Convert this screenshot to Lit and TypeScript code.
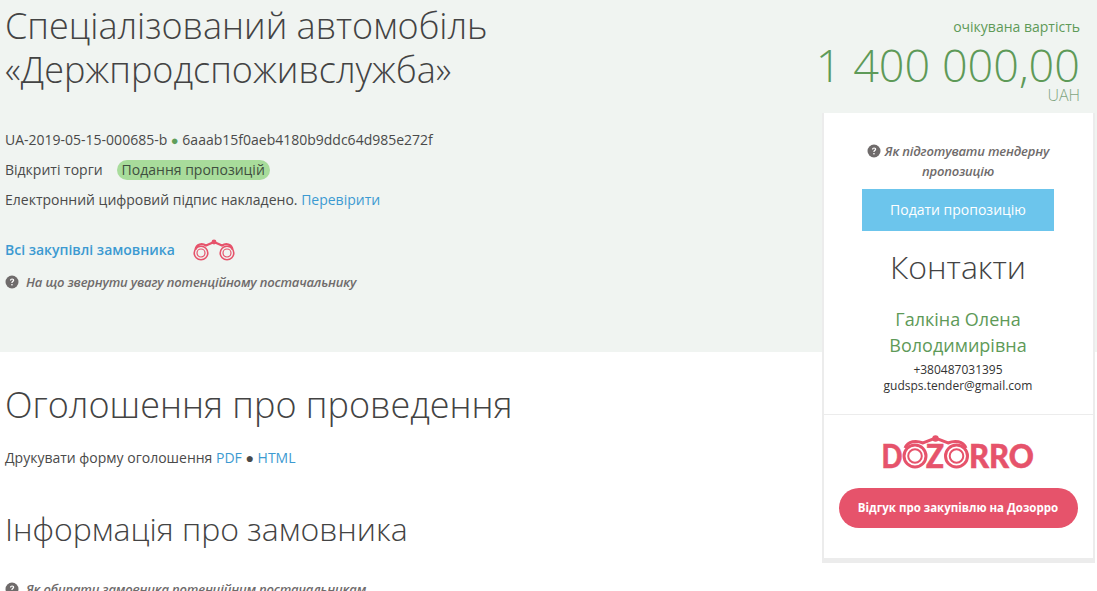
import { LitElement, html, css, svg } from "lit";
import { customElement } from "lit/decorators.js";

const help = html`<svg class="help" viewBox="0 0 14 14" aria-hidden="true"><circle cx="7" cy="7" r="6.500" fill="#6f6b6b"/><path d="M4.900 5.400c.1-1.300 1-2 2.200-2 1.300 0 2.100.8 2.100 1.800 0 1.500-1.700 1.500-1.700 2.900H6.300c0-1.900 1.600-1.900 1.600-2.900 0-.4-.3-.7-.8-.7-.6 0-.9.400-1 1z" fill="#fff"/><rect x="6.300" y="9" width="1.300" height="1.400" fill="#fff"/></svg>`;

const smallBino = svg`
  <path d="M2.500 11.500 C3.500 6 9 5 13 7.500 L21 4 L29 7.500 C33 5 38.500 6 39.500 11.500" fill="none" stroke="currentColor" stroke-width="2.200"/>
  <circle cx="21" cy="4" r="2.400" fill="currentColor"/>
  <circle cx="8" cy="15" r="6.800" fill="none" stroke="currentColor" stroke-width="1.600"/>
  <circle cx="8" cy="15" r="4" fill="none" stroke="currentColor" stroke-width="1.200"/>
  <circle cx="34" cy="15" r="6.800" fill="none" stroke="currentColor" stroke-width="1.600"/>
  <circle cx="34" cy="15" r="4" fill="none" stroke="currentColor" stroke-width="1.200"/>`;

const logoBino = svg`
  <path d="M24 13 C27 6 35 5 42 8 L54.500 3 L67 8 C74 5 82 6 85 13" fill="none" stroke="currentColor" stroke-width="3"/>
  <circle cx="54.500" cy="3.500" r="3.200" fill="currentColor"/>
  <circle cx="34" cy="21" r="11" fill="none" stroke="currentColor" stroke-width="3"/>
  <circle cx="34" cy="21" r="6.800" fill="none" stroke="currentColor" stroke-width="2"/>
  <circle cx="75.500" cy="21" r="11" fill="none" stroke="currentColor" stroke-width="3"/>
  <circle cx="75.500" cy="21" r="6.800" fill="none" stroke="currentColor" stroke-width="2"/>`;

@customElement("app-root")
export class AppRoot extends LitElement {
  static styles = css`
    :host { display: block; height: 591px; overflow: hidden; font-family: "Open Sans", sans-serif; font-size: 14px; line-height: 20px; color: #4a4a4a; background: #fff; }
    a { color: #3c9ad1; text-decoration: none; }
    h1, h2, h3, p { margin: 0; font-weight: 300; }
    .band { height: 352px; background: #f0f4f1; display: flex; justify-content: space-between; align-items: flex-start; padding: 0 2px 0 5px; box-sizing: border-box; }
    .left { width: 560px; }
    h1 { font-size: 36px; line-height: 44px; padding-top: 4px; color: #434343; }
    .meta { margin-top: 38px; display: flex; flex-direction: column; gap: 10px; }
    .dot { color: #5f9e5b; font-size: 13px; line-height: 1; }
    .type { display: flex; align-items: center; gap: 14px; }
    .pill { background: #a8dc9b; border-radius: 10px; padding: 0 5px; color: #3f4f3f; }
    .buyer { display: flex; align-items: center; gap: 18px; margin-top: 28px; font-weight: 600; }
    .bino { width: 42px; height: 23px; color: #e6536b; flex: none; }
    .hint { display: flex; gap: 7px; align-items: center; font-style: italic; font-weight: 600; font-size: 13px; letter-spacing: -0.17px; color: #6f6b6b; }
    .help { width: 14px; height: 14px; flex: none; }
    .band .hint { margin-top: 11px; }
    .right { width: 273px; flex: none; display: flex; flex-direction: column; }
    .price { text-align: right; color: #5e9a58; padding-right: 15px; }
    .label { padding-top: 17px; }
    .amount { font-size: 45px; line-height: 45px; font-weight: 300; margin-top: 5px; white-space: nowrap; margin-left: -20px; }
    .cur { font-size: 16px; line-height: 16px; font-weight: 300; color: #7fa47f; }
    .card { flex: none; margin-top: 10px; padding-right: 1px; background: #fff; border: solid #ececec; border-width: 0 2px 5px 2px; height: 450px; box-sizing: border-box; display: flex; flex-direction: column; align-items: center; text-align: center; }
    .card .hint { width: 200px; display: block; margin-top: 28px; text-align: center; }
    .card .hint .help { vertical-align: -2px; margin-right: 4px; }
    .submit { display: flex; align-items: center; justify-content: center; width: 192px; height: 42px; margin-top: 8px; background: #6cc5ec; color: #fff; }
    h3 { font-size: 32px; line-height: 40px; margin-top: 16px; color: #434343; }
    .name { font-size: 18px; line-height: 26px; color: #5e9a58; margin-top: 19px; width: 200px; }
    .tel { font-size: 12px; line-height: 16px; margin-top: 4px; color: #333; }
    .section2 { border-top: 1px solid #ececec; align-self: stretch; margin: 20px -1px 0 0; padding-right: 1px; display: flex; flex-direction: column; align-items: center; }
    .logo { width: 154px; height: 41px; margin-top: 20px; color: #e6536b; display: block; }
    .logo text { font: 900 33px "Lato", sans-serif; fill: currentColor; stroke: currentColor; stroke-width: 0.5px; }
    .review { display: flex; align-items: center; justify-content: center; width: 239px; height: 40px; margin-top: 12px; border-radius: 20px; background: #e6536b; color: #fff; font-size: 11.5px; font-weight: 700; }
    main { padding: 29px 5px 0; }
    h2 { font-size: 36px; line-height: 48px; color: #434343; }
    .print { margin-top: 19px; }
    h2.info { font-size: 32px; line-height: 42px; margin-top: 40px; }
    main .hint { margin-top: 29px; }
  `;

  render() {
    return html`
      <section class="band">
        <div class="left">
          <h1>Спеціалізований автомобіль «Держпродспоживслужба»</h1>
          <div class="meta">
            <div>UA-2019-05-15-000685-b <span class="dot">●</span> 6aaab15f0aeb4180b9ddc64d985e272f</div>
            <div class="type">Відкриті торги <span class="pill">Подання пропозицій</span></div>
            <div>Електронний цифровий підпис накладено. <a>Перевірити</a></div>
          </div>
          <div class="buyer"><a>Всі закупівлі замовника</a>
            <svg class="bino" viewBox="0 0 42 23">${smallBino}</svg></div>
          <div class="hint">${help}<span>На що звернути увагу потенційному постачальнику</span></div>
        </div>
        <div class="right">
          <div class="price">
            <div class="label">очікувана вартість</div>
            <div class="amount">1 400 000,00</div>
            <div class="cur">UAH</div>
          </div>
          <aside class="card">
            <div class="hint">${help}<span>Як підготувати тендерну пропозицію</span></div>
            <a class="submit">Подати пропозицію</a>
            <h3>Контакти</h3>
            <div class="name">Галкіна Олена Володимирівна</div>
            <div class="tel">+380487031395<br />gudsps.tender@gmail.com</div>
            <div class="section2">
              <svg class="logo" viewBox="0 0 154 41">
                ${logoBino}
                <text x="0.500" y="33" textLength="21" lengthAdjust="spacingAndGlyphs">D</text>
                <text x="45" y="33" textLength="18" lengthAdjust="spacingAndGlyphs">Z</text>
                <text x="88" y="33" textLength="65" lengthAdjust="spacingAndGlyphs">RRO</text>
              </svg>
              <a class="review">Відгук про закупівлю на Дозорро</a>
            </div>
          </aside>
        </div>
      </section>
      <main>
        <h2>Оголошення про проведення</h2>
        <div class="print">Друкувати форму оголошення <a>PDF</a> ● <a>HTML</a></div>
        <h2 class="info">Інформація про замовника</h2>
        <div class="hint">${help}<span>Як обирати замовника потенційним постачальникам</span></div>
      </main>
    `;
  }
}
